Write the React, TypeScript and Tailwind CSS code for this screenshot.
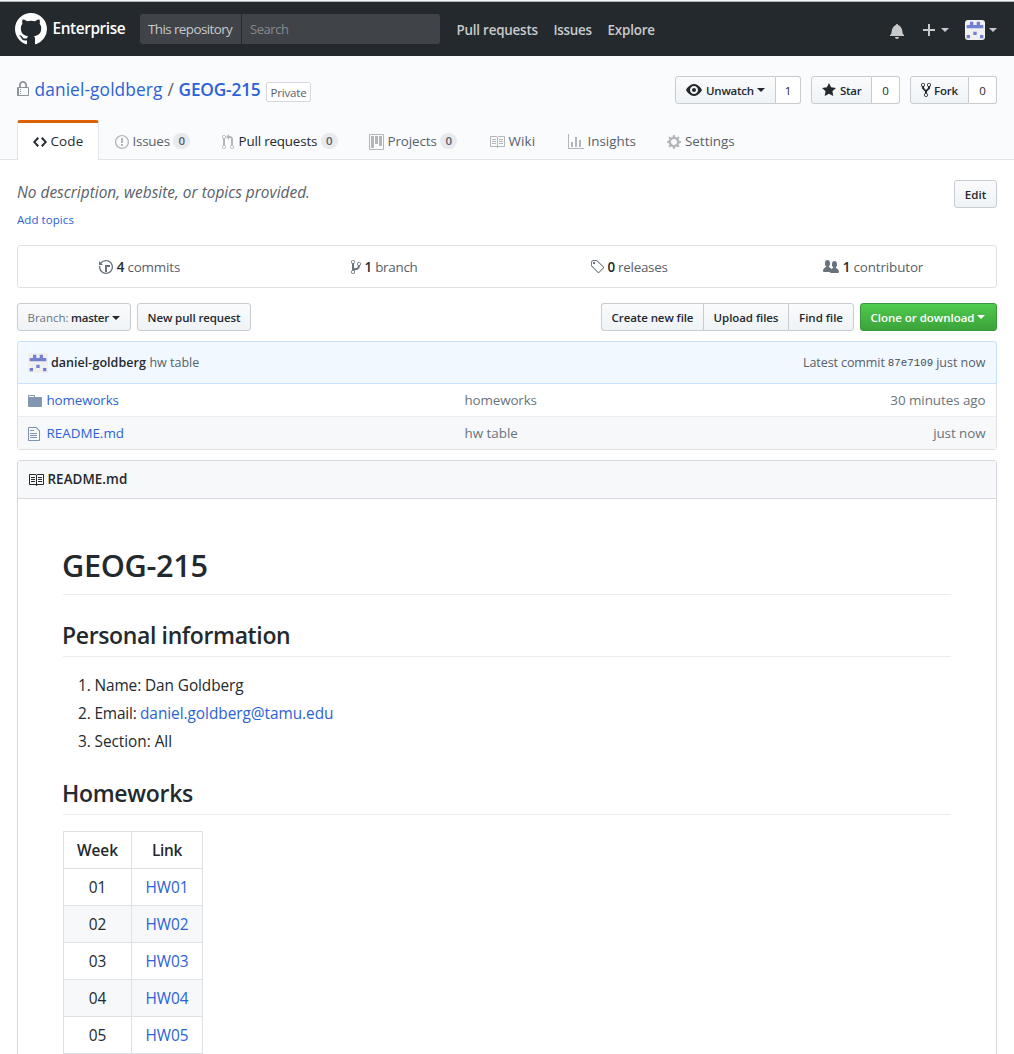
import type { ReactNode } from "react";

const PATHS = {
  mark: "M8 0C3.58 0 0 3.58 0 8c0 3.54 2.29 6.53 5.47 7.59.4.07.55-.17.55-.38 0-.19-.01-.82-.01-1.49-2.01.37-2.53-.49-2.69-.94-.09-.23-.48-.94-.82-1.13-.28-.15-.68-.52-.01-.53.63-.01 1.08.58 1.23.82.72 1.21 1.87.87 2.33.66.07-.52.28-.87.51-1.07-1.78-.2-3.64-.89-3.64-3.95 0-.87.31-1.59.82-2.15-.08-.2-.36-1.02.08-2.12 0 0 .67-.21 2.2.82.64-.18 1.32-.27 2-.27.68 0 1.36.09 2 .27 1.53-1.04 2.2-.82 2.2-.82.44 1.1.16 1.92.08 2.12.51.56.82 1.27.82 2.15 0 3.07-1.87 3.75-3.65 3.95.29.25.54.73.54 1.48 0 1.07-.01 1.93-.01 2.2 0 .21.15.46.55.38A8.013 8.013 0 0 0 16 8c0-4.42-3.58-8-8-8z",
  lock: "M4 13H3v-1h1v1zm8-6v7c0 .55-.45 1-1 1H1c-.55 0-1-.45-1-1V7c0-.55.45-1 1-1h1V4c0-2.2 1.8-4 4-4s4 1.8 4 4v2h1c.55 0 1 .45 1 1zM3.8 6h4.41V4c0-1.22-.98-2.2-2.2-2.2-1.22 0-2.2.98-2.2 2.2v2H3.8zM11 7H2v7h9V7zM4 8H3v1h1V8zm0 2H3v1h1v-1z",
  code: "M9.5 3L8 4.5 11.5 8 8 11.5 9.5 13 14 8 9.5 3zm-5 0L0 8l4.5 5L6 11.5 2.5 8 6 4.5 4.5 3z",
  issue: "M7 2.3c3.14 0 5.7 2.56 5.7 5.7s-2.56 5.7-5.7 5.7A5.71 5.71 0 0 1 1.3 8c0-3.14 2.56-5.7 5.7-5.7zM7 1C3.14 1 0 4.14 0 8s3.14 7 7 7 7-3.14 7-7-3.14-7-7-7zm1 3H6v5h2V4zm0 6H6v2h2v-2z",
  pull: "M11 11.28V5c-.03-.78-.34-1.47-.94-2.06C9.46 2.35 8.78 2.03 8 2H7V0L4 3l3 3V4h1c.27.02.48.11.69.31.21.2.3.42.31.69v6.28A1.993 1.993 0 0 0 10 15a1.993 1.993 0 0 0 1-3.72zm-1 2.92c-.66 0-1.2-.55-1.2-1.2 0-.65.55-1.2 1.2-1.2.65 0 1.2.55 1.2 1.2 0 .65-.55 1.2-1.2 1.2zM4 3c0-1.11-.89-2-2-2a1.993 1.993 0 0 0-1 3.72v6.56A1.993 1.993 0 0 0 2 15a1.993 1.993 0 0 0 1-3.72V4.72c.59-.34 1-.98 1-1.72zm-.8 10c0 .66-.55 1.2-1.2 1.2-.65 0-1.2-.55-1.2-1.2 0-.65.55-1.2 1.2-1.2.65 0 1.2.55 1.2 1.2zM2 4.2C1.34 4.2.8 3.65.8 3c0-.65.55-1.2 1.2-1.2.65 0 1.2.55 1.2 1.2 0 .65-.55 1.2-1.2 1.2z",
  project: "M10 12h3V2h-3v10zm-4-2h3V2H6v8zm-4 4h3V2H2v12zm-1 1h13V1H1v14zM14 0H1a1 1 0 0 0-1 1v14a1 1 0 0 0 1 1h13a1 1 0 0 0 1-1V1a1 1 0 0 0-1-1z",
  book: "M3 5h4v1H3V5zm0 3h4V7H3v1zm0 2h4V9H3v1zm11-5h-4v1h4V5zm0 2h-4v1h4V7zm0 2h-4v1h4V9zm2-6v9c0 .55-.45 1-1 1H9.5l-1 1-1-1H2c-.55 0-1-.45-1-1V3c0-.55.45-1 1-1h5.5l1 1 1-1H15c.55 0 1 .45 1 1zm-8 .5L7.5 3H2v9h6V3.5zm7-.5H9.5l-.5.5V12h6V3z",
  graph: "M16 14v1H0V0h1v14h15zM5 13H3V8h2v5zm4 0H7V3h2v10zm4 0h-2V6h2v7z",
  gear: "M14 8.77v-1.6l-1.94-.64-.45-1.09.88-1.84-1.13-1.13-1.81.91-1.09-.45-.69-1.92h-1.6l-.63 1.94-1.11.45-1.84-.88-1.13 1.13.91 1.81-.45 1.09L0 7.23v1.59l1.94.64.45 1.09-.88 1.84 1.13 1.13 1.81-.91 1.09.45.69 1.92h1.59l.63-1.94 1.11-.45 1.84.88 1.13-1.13-.92-1.81.47-1.09L14 8.75v.02zM7 11c-1.66 0-3-1.34-3-3s1.34-3 3-3 3 1.34 3 3-1.34 3-3 3z",
  eye: "M8.06 2C3 2 0 8 0 8s3 6 8.06 6C13 14 16 8 16 8s-3-6-7.94-6zM8 12c-2.2 0-4-1.78-4-4 0-2.2 1.8-4 4-4 2.22 0 4 1.8 4 4 0 2.22-1.78 4-4 4zm2-4c0 1.11-.89 2-2 2-1.11 0-2-.89-2-2 0-1.11.89-2 2-2 1.11 0 2 .89 2 2z",
  star: "M14 6l-4.9-.64L7 1 4.9 5.36 0 6l3.6 3.26L2.67 14 7 11.67 11.33 14l-.93-4.74z",
  fork: "M8 1a1.993 1.993 0 0 0-1 3.72V6L5 8 3 6V4.72A1.993 1.993 0 0 0 2 1a1.993 1.993 0 0 0-1 3.72V6.5l3 3v1.78A1.993 1.993 0 0 0 5 15a1.993 1.993 0 0 0 1-3.72V9.5l3-3V4.72A1.993 1.993 0 0 0 8 1zM2 4.2C1.34 4.2.8 3.65.8 3c0-.65.55-1.2 1.2-1.2.65 0 1.2.55 1.2 1.2 0 .65-.55 1.2-1.2 1.2zm3 10c-.66 0-1.2-.55-1.2-1.2 0-.65.55-1.2 1.2-1.2.65 0 1.2.55 1.2 1.2 0 .65-.55 1.2-1.2 1.2zm3-10c-.66 0-1.2-.55-1.2-1.2 0-.65.55-1.2 1.2-1.2.65 0 1.2.55 1.2 1.2 0 .65-.55 1.2-1.2 1.2z",
  history: "M8 13H6V6h5v2H8v5zM7 1C4.81 1 2.87 2.02 1.59 3.59L0 2v4h4L2.5 4.5C3.55 3.17 5.17 2.3 7 2.3c3.14 0 5.7 2.56 5.7 5.7s-2.56 5.7-5.7 5.7A5.71 5.71 0 0 1 1.3 8c0-.34.03-.67.09-1H.08C.03 7.33 0 7.66 0 8c0 3.86 3.14 7 7 7s7-3.14 7-7-3.14-7-7-7z",
  branch: "M10 5c0-1.11-.89-2-2-2a1.993 1.993 0 0 0-1 3.72v.3c-.02.52-.23.98-.63 1.38-.4.4-.86.61-1.38.63-.83.02-1.48.16-2 .45V4.72a1.993 1.993 0 0 0-1-3.72C.88 1 0 1.89 0 3a2 2 0 0 0 1 1.72v6.56c-.59.35-1 .99-1 1.72 0 1.11.89 2 2 2 1.11 0 2-.89 2-2 0-.53-.2-1-.53-1.36.09-.06.48-.41.59-.47.25-.11.56-.17.94-.17 1.05-.05 1.95-.45 2.75-1.25S8.95 7.77 9 6.73h-.02C9.59 6.37 10 5.73 10 5zM2 1.8c.66 0 1.2.55 1.2 1.2 0 .65-.55 1.2-1.2 1.2C1.35 4.2.8 3.65.8 3c0-.65.55-1.2 1.2-1.2zm0 12.41c-.66 0-1.2-.55-1.2-1.2 0-.65.55-1.2 1.2-1.2.65 0 1.2.55 1.2 1.2 0 .65-.55 1.2-1.2 1.2zm6-8c-.66 0-1.2-.55-1.2-1.2 0-.65.55-1.2 1.2-1.2.65 0 1.2.55 1.2 1.2 0 .65-.55 1.2-1.2 1.2z",
  tag: "M7.73 1.73C7.26 1.26 6.62 1 5.96 1H3.5C2.13 1 1 2.13 1 3.5v2.47c0 .66.27 1.3.73 1.77l6.06 6.06c.39.39 1.02.39 1.41 0l4.59-4.59a.996.996 0 0 0 0-1.41L7.73 1.73zM2.38 7.09c-.31-.3-.47-.7-.47-1.13V3.5c0-.88.72-1.59 1.59-1.59h2.47c.42 0 .83.16 1.13.47l6.14 6.13-4.73 4.73-6.13-6.15zM3.01 3h2v2H3V3h.01z",
  people: "M16 12.999c0 .439-.45 1-1 1H7.995c-.539 0-.994-.447-.995-.999H1c-.54 0-1-.561-1-1 0-2.634 3-4 3-4s.229-.409 0-1c-.841-.621-1.058-.59-1-3 .058-2.419 1.367-3 2.5-3s2.442.58 2.5 3c.058 2.41-.159 2.379-1 3-.229.59 0 1 0 1s1.549.711 2.42 2.088C9.196 9.369 10 8.999 10 8.999s.229-.409 0-1c-.841-.62-1.058-.59-1-3 .058-2.419 1.367-3 2.5-3s2.437.581 2.495 3c.059 2.41-.158 2.38-1 3-.229.59 0 1 0 1s3.005 1.366 3.005 4z",
  folder: "M13 4H7V3c0-.66-.31-1-1-1H1c-.55 0-1 .45-1 1v10c0 .55.45 1 1 1h12c.55 0 1-.45 1-1V5c0-.55-.45-1-1-1zM6 4H1V3h5v1z",
  file: "M6 5H2V4h4v1zM2 8h7V7H2v1zm0 2h7V9H2v1zm0 2h7v-1H2v1zm10-7.5V14c0 .55-.45 1-1 1H1c-.55 0-1-.45-1-1V2c0-.55.45-1 1-1h7.5L12 4.5zM11 5L8 2H1v12h10V5z",
  bell: "M14 12v1H0v-1l.73-.58c.77-.77.81-2.55 1.19-4.42C2.69 3.23 6 2 6 2c0-.55.45-1 1-1s1 .45 1 1c0 0 3.39 1.23 4.16 5 .38 1.88.42 3.66 1.19 4.42l.66.58H14zm-7 4c1.11 0 2-.89 2-2H5c0 1.11.89 2 2 2z",
};

function Icon({ name, w = 16, className = "" }: { name: keyof typeof PATHS; w?: number; className?: string }) {
  return (
    <svg viewBox={`0 0 ${w} 16`} width={w} height={16} className={`shrink-0 fill-current ${className}`} aria-hidden="true">
      <path fillRule="evenodd" d={PATHS[name]} />
    </svg>
  );
}

function Caret({ className = "" }: { className?: string }) {
  return <span className={`inline-block size-0 shrink-0 border-x-4 border-t-4 border-x-transparent border-t-current ${className}`} />;
}

function Identicon({ className = "" }: { className?: string }) {
  return (
    <svg viewBox="0 0 6 6" className={`shrink-0 bg-[#f0f0f0] ${className}`} aria-hidden="true">
      <path fill="#7180d1" d="M1.5.5h1v1h1v-1h1v1h1v1h-5v-1h1zM2.5 3.5h1v1h-1zM.5 4.5h1v1h-1zM4.5 4.5h1v1h-1z" />
    </svg>
  );
}

const btn =
  "flex h-7 items-center whitespace-nowrap border border-[#c8ccd0] bg-linear-to-b from-[#fafbfc] to-[#eff3f6] text-[11.5px] font-semibold text-[#24292e]";

function SocialButton({ children, count, left, right }: { children: ReactNode; count: string; left: string; right: string }) {
  return (
    <div className="flex">
      <button className={`${btn} rounded-l-[3px] pl-[10px] ${left}`}>{children}</button>
      <span className={`flex h-7 items-center justify-center rounded-r-[3px] border border-l-0 border-[#c8ccd0] bg-white pt-px text-[11.5px] font-medium text-[#24292e] ${right}`}>
        {count}
      </span>
    </div>
  );
}

function Counter() {
  return (
    <span className="flex h-4 w-[17px] items-center justify-center rounded-full bg-[#e8eaed] text-[11.5px] font-semibold text-[#586069]">0</span>
  );
}

function Tab({ icon, iconW, label, className, text = "", counter = false }: {
  icon: keyof typeof PATHS; iconW: number; label: string; className: string; text?: string; counter?: boolean;
}) {
  return (
    <a className={`flex items-center whitespace-nowrap pt-[3px] ${className}`}>
      <Icon name={icon} w={iconW} className="text-[#b4b7ba]" />
      <span className={`-mt-0.5 ml-[3.5px] ${text}`}>{label}</span>
      {counter && <span className="-mt-px ml-[3.5px]"><Counter /></span>}
    </a>
  );
}

function Stat({ icon, w, n, label, tracking }: { icon: keyof typeof PATHS; w: number; n: string; label: string; tracking: string }) {
  return (
    <li className="flex flex-1 items-center justify-center pr-px">
      <Icon name={icon} w={w} className="mt-px text-[#6a737d]" />
      <span className="ml-[3.5px] font-semibold text-[#24292e]">{n}</span>
      <span className={`ml-[3px] ${tracking}`}>{label}</span>
    </li>
  );
}

const link = "text-[#2c62d6]";

export default function App() {
  return (
    <div className="h-[1054px] overflow-hidden bg-white font-['Open_Sans','Noto_Sans',sans-serif] text-[13.4px] leading-5 text-[#24292e]">
      <div className="h-px bg-[#f1f3f4]" />
      <header className="flex h-[55px] items-center border-t border-[#b0b4b8] bg-[#24292e] pl-[15px] pr-[17px] text-[#c8c9cb]">
        <Icon name="mark" className="-mt-px size-8 text-white" />
        <span className="ml-[5.5px] w-[87px] text-[15.4px] font-semibold tracking-[-0.027em] text-white">Enterprise</span>
        <div className="-mt-px flex h-[30px] w-[300px] items-center rounded-[3px] bg-[#404448] whitespace-nowrap">
          <span className="flex h-full w-[102px] items-center border-r border-[#24292e] pl-[8.5px] tracking-[-0.043em]">This repository</span>
          <span className="pl-[8.5px] text-[13px] tracking-[-0.033em] text-[#86898c]">Search</span>
        </div>
        <nav className="mt-px ml-[17px] flex items-center font-semibold whitespace-nowrap">
          <a className="w-[97px] tracking-[-0.016em]">Pull requests</a>
          <a className="w-[54px] tracking-[-0.019em]">Issues</a>
          <a className="tracking-[-0.013em]">Explore</a>
        </nav>
        <div className="ml-auto flex items-center">
          <Icon name="bell" w={14} className="mt-[3px]" />
          <svg viewBox="0 0 12 12" className="ml-[19px] mt-[2px] size-3" aria-hidden="true">
            <path d="M6 0v12M0 6h12" stroke="currentColor" strokeWidth="2" />
          </svg>
          <Caret className="ml-1.5 mt-[2px]" />
          <Identicon className="ml-4 mt-[2px] size-5 rounded-[3px]" />
          <Caret className="ml-1 mt-[2px]" />
        </div>
      </header>

      <section className="h-[104px] border-b border-[#e1e4e8] bg-[#fafbfc] px-[17px] pt-5">
        <div className="flex h-7 items-center justify-between">
          <h1 className="flex items-center whitespace-nowrap text-[17.3px]">
            <Icon name="lock" w={12} className="-mt-0.5 text-[#8d9298]" />
            <a className={`ml-[5.5px] tracking-[0.007em] ${link}`}>daniel-goldberg</a>
            <span className="ml-[5px] w-[10px] text-[#586069]">/</span>
            <a className={`w-[88px] pl-px font-semibold tracking-[-0.011em] ${link}`}>GEOG-215</a>
            <span className="mt-1 flex h-5 items-center rounded-[2px] border border-[#d5d9dd] bg-white px-1 pt-px text-[11.5px] tracking-[-0.016em] text-[#586069]">Private</span>
          </h1>
          <div className="flex gap-[10px]">
            <SocialButton count="1" left="w-[101px]" right="w-[25px]">
              <Icon name="eye" />
              <span className="mt-px ml-1 tracking-[-0.019em]">Unwatch</span>
              <Caret className="ml-[3px]" />
            </SocialButton>
            <SocialButton count="0" left="w-[61px]" right="w-[28px]">
              <Icon name="star" w={14} />
              <span className="mt-px ml-1 tracking-[-0.023em]">Star</span>
            </SocialButton>
            <SocialButton count="0" left="w-[59px]" right="w-[28px]">
              <Icon name="fork" w={10} />
              <span className="mt-px ml-[3px] tracking-[-0.016em]">Fork</span>
            </SocialButton>
          </div>
        </div>
        <nav className="mt-4 flex h-10 text-[#586069]">
          <a className="flex w-[82px] items-center rounded-t-[3px] border-x border-t-[3px] border-x-[#e1e4e8] border-t-[#dc5f00] bg-white pl-[15px] text-[#24292e]">
            <Icon name="code" w={14} />
            <span className="-mt-0.5 ml-[3.5px] tracking-[0.012em]">Code</span>
          </a>
          <Tab icon="issue" iconW={14} label="Issues" className="ml-4 w-[107px]" text="tracking-[-0.016em]" counter />
          <Tab icon="pull" iconW={12} label="Pull requests" className="w-[147px]" text="pl-px tracking-[-0.013em] text-[#24292e]" counter />
          <Tab icon="project" iconW={15} label="Projects" className="w-[120px]" text="tracking-[-0.007em]" counter />
          <Tab icon="book" iconW={16} label="Wiki" className="w-[79px]" text="tracking-[0.014em]" />
          <Tab icon="graph" iconW={16} label="Insights" className="w-[99px]" />
          <Tab icon="gear" iconW={14} label="Settings" className="" text="pl-[0.5px]" />
        </nav>
      </section>

      <main className="px-[17px] pt-5">
        <div className="flex justify-between">
          <div className="whitespace-nowrap">
            <p className="h-[25px] pt-px text-[15.4px] leading-6 tracking-[0.001em] text-[#586069] italic">No description, website, or topics provided.</p>
            <a className={`mt-[6px] block h-[18px] text-[11.5px] leading-[18px] tracking-[0.006em] ${link}`}>Add topics</a>
          </div>
          <button className={`${btn} w-[43px] justify-center rounded-[3px] pt-px tracking-[0.006em]`}>Edit</button>
        </div>

        <ul className="mt-[16px] flex h-[43px] rounded-[3px] border border-[#dfe2e5] text-[#586069]">
          <Stat icon="history" w={14} n="4" label="commits" tracking="tracking-[-0.011em]" />
          <Stat icon="branch" w={10} n="1" label="branch" tracking="tracking-[-0.02em]" />
          <Stat icon="tag" w={14} n="0" label="releases" tracking="tracking-[-0.02em]" />
          <Stat icon="people" w={16} n="1" label="contributor" tracking="tracking-[-0.009em]" />
        </ul>

        <div className="mt-[15px] flex h-7">
          <button className={`${btn} w-[114px] rounded-[3px] pt-px pl-[9.5px]`}>
            <span className="w-[43.5px] text-left font-normal tracking-[-0.003em] text-[#6a737d]">Branch:</span>
            <span className="tracking-[-0.021em]">master</span>
            <Caret className="ml-[3px]" />
          </button>
          <button className={`${btn} ml-1.5 w-[114px] justify-center rounded-[3px] pt-px tracking-[-0.01em]`}>New pull request</button>
          <div className="ml-auto flex">
            <button className={`${btn} w-[102px] justify-center rounded-l-[3px] border-r-0 pt-px tracking-[-0.008em]`}>Create new file</button>
            <button className={`${btn} w-[85px] justify-center border-r-0 pt-px tracking-[-0.005em]`}>Upload files</button>
            <button className={`${btn} w-[66px] justify-center rounded-r-[3px] pt-px`}>Find file</button>
          </div>
          <button className="ml-1.5 flex h-7 w-[137px] items-center rounded-[3px] border border-[#38993f] bg-linear-to-b from-[#4fcb4c] to-[#3ba33a] pt-px pl-[9.5px] text-[11.5px] font-semibold whitespace-nowrap text-white">
            <span className="tracking-[-0.002em]">Clone or download</span>
            <Caret className="-mt-px ml-[2.5px]" />
          </button>
        </div>

        <div className="mt-[10px] flex h-[43px] items-center rounded-t-[3px] border border-[#c8e1ff] bg-[#f1f8ff] px-[10px] text-[12.5px] whitespace-nowrap text-[#586069]">
          <Identicon className="size-5" />
          <span className="ml-[3px] font-semibold tracking-[0.003em] text-[#24292e]">daniel-goldberg</span>
          <span className="ml-[3.5px]">hw table</span>
          <span className="ml-auto tracking-[-0.007em]">Latest commit</span>
          <span className="mt-px ml-[3px] font-['Liberation_Mono',monospace] text-[10.8px] text-[#444d56]">87e7109</span>
          <span className="mr-[0.5px] ml-[3px]">just now</span>
        </div>
        <div className="rounded-b-[3px] border border-t-0 border-[#dfe2e5] text-[#6a737d]">
          <div className="flex h-8 items-center px-[10px]">
            <Icon name="folder" w={14} className="mt-[2px] text-[#8397b3]" />
            <a className={`ml-1 w-[418.5px] pl-[0.5px] tracking-[-0.01em] ${link}`}>homeworks</a>
            <span className="tracking-[-0.01em]">homeworks</span>
            <span className="mr-[0.5px] ml-auto tracking-[-0.004em]">30 minutes ago</span>
          </div>
          <div className="flex h-[33px] items-center border-t border-[#eaecef] bg-[#f6f8fa] px-[10px]">
            <Icon name="file" w={12} className="mt-[2px] text-[#7f93b0]" />
            <a className={`ml-1.5 w-[418.5px] pl-[0.5px] ${link}`}>README.md</a>
            <span>hw table</span>
            <span className="mr-[0.5px] ml-auto tracking-[-0.005em]">just now</span>
          </div>
        </div>

        <article className="mt-[10px] h-[620px] rounded-t-[3px] border border-[#d5d9dd]">
          <h3 className="flex h-[38px] items-center border-b border-[#d5d9dd] bg-[#f6f8fa] pl-[10px] font-semibold">
            <Icon name="book" className="mt-px" />
            <span className="-mt-px ml-[3.5px] tracking-[0.004em]">README.md</span>
          </h3>
          <div className="px-[45px] pt-[46px] text-[15.4px] leading-6">
            <h1 className="h-[50px] border-b border-[#eaecef] text-[30.7px] leading-10 font-semibold tracking-[-0.011em]"><span className="-ml-px">GEOG-215</span></h1>
            <h2 className="mt-6 h-[38px] border-b border-[#eaecef] text-[23px] leading-[32px] font-semibold tracking-[-0.016em]"><span className="-ml-px">Personal information</span></h2>
            <ol className="mt-[17px] flex flex-col gap-1">
              <li className="flex"><span className="w-[31.5px] pl-[15px]">1.</span><span className="tracking-[-0.006em]">Name: Dan Goldberg</span></li>
              <li className="flex">
                <span className="w-[31.5px] pl-[15px]">2.</span>
                <span className="w-[45.5px] tracking-[-0.012em]">Email:</span>
                <a className={`tracking-[-0.003em] ${link}`}>daniel.goldberg@tamu.edu</a>
              </li>
              <li className="flex"><span className="w-[31.5px] pl-[15px]">3.</span><span className="tracking-[-0.003em]">Section: All</span></li>
            </ol>
            <h2 className="mt-[23px] h-[38px] border-b border-[#eaecef] text-[23px] leading-[32px] font-semibold tracking-[-0.013em]"><span className="-ml-px">Homeworks</span></h2>
            <table className="mt-4 w-[140px] table-fixed border-collapse text-center">
              <thead>
                <tr className="h-[37px]">
                  <th className="w-[68px] border border-[#dfe2e5] p-0 pt-0.5 font-semibold">Week</th>
                  <th className="border border-[#dfe2e5] p-0 pt-0.5 font-semibold tracking-[-0.019em]">Link</th>
                </tr>
              </thead>
              <tbody>
                {["01", "02", "03", "04", "05"].map((n) => (
                  <tr key={n} className="h-[37px] even:bg-[#f6f8fa]">
                    <td className="border border-[#dfe2e5] p-0 pt-0.5">{n}</td>
                    <td className={`border border-[#dfe2e5] p-0 pt-0.5 ${link}`}>HW{n}</td>
                  </tr>
                ))}
              </tbody>
            </table>
          </div>
        </article>
      </main>
    </div>
  );
}
